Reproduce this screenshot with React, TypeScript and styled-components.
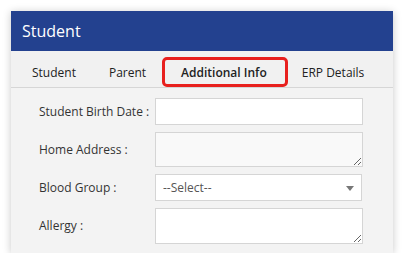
import React from "react";
import styled, { createGlobalStyle } from "styled-components";

const Global = createGlobalStyle`
  html, body { margin: 0; padding: 0; background: #ffffff; }
  body { font-family: "Open Sans", "Noto Sans", Arial, sans-serif; }
  * { box-sizing: border-box; }
`;

const Page = styled.div`
  padding: 11px 0 0 11px;
`;

const Card = styled.div`
  width: 382px;
  height: 242px;
  background: #f3f3f3;
  box-shadow: 0 1px 8px rgba(0, 0, 0, 0.22);
  display: flex;
  flex-direction: column;
`;

const Header = styled.div`
  height: 40px;
  background: #23418f;
  color: #ffffff;
  font-size: 16px;
  display: flex;
  align-items: center;
  padding-left: 11px;
`;

const TabBar = styled.div`
  height: 37px;
  display: flex;
  align-items: flex-end;
  padding: 0 0 0 4px;
  border-bottom: 1px solid #d6d6d6;
  background: #f1f1f1;
`;

const Tab = styled.div<{ $active?: boolean }>`
  height: 30px;
  display: flex;
  align-items: center;
  white-space: nowrap;
  padding: 1px ${(p) => (p.$active ? "18px" : "13px")} 0 ${(p) => (p.$active ? "16px" : "14px")};
  margin-right: ${(p) => (p.$active ? "-3px" : "0")};
  font-size: 12px;
  color: #222;
  font-weight: ${(p) => (p.$active ? 600 : 400)};
  border: 3px solid ${(p) => (p.$active ? "#e8201e" : "transparent")};
  border-radius: 5px;
`;

const Form = styled.div`
  padding: 10px 30px 0 28px;
  display: grid;
  grid-template-columns: 116px 208px;
  row-gap: 7px;
  align-items: center;
`;

const Label = styled.label`
  font-size: 12px;
  line-height: 16px;
  color: #333;
  white-space: nowrap;
`;

const Input = styled.input`
  height: 27px;
  width: 100%;
  border: 1px solid #d5d5d5;
  background: #ffffff;
  outline: none;
  margin: 0;
  display: block;
`;

const TextArea = styled.textarea<{ $grey?: boolean; $h: number }>`
  height: ${(p) => p.$h}px;
  width: 100%;
  border: 1px solid #d5d5d5;
  background: ${(p) => (p.$grey ? "#f9f9f9" : "#ffffff")};
  outline: none;
  margin: 0;
  display: block;
  resize: vertical;
`;

const SelectWrap = styled.div`
  position: relative;
  height: 27px;
  width: 207px;
`;

const Select = styled.select`
  appearance: none;
  -webkit-appearance: none;
  display: block;
  width: 100%;
  height: 100%;
  border: 1px solid #d5d5d5;
  background: #ffffff;
  font-family: "Open Sans", Arial, sans-serif;
  font-size: 12px;
  color: #555;
  padding: 0 0 0 7px;
  outline: none;
  margin: 0;
`;

const Arrow = styled.span`
  position: absolute;
  right: 8px;
  top: 12px;
  width: 0;
  height: 0;
  border-left: 4px solid transparent;
  border-right: 4px solid transparent;
  border-top: 5px solid #777;
  pointer-events: none;
`;

export default function App() {
  return (
    <Page>
      <Global />
      <Card>
        <Header>Student</Header>
        <TabBar>
          <Tab>Student</Tab>
          <Tab>Parent</Tab>
          <Tab $active>Additional Info</Tab>
          <Tab>ERP Details</Tab>
        </TabBar>
        <Form>
          <Label>Student Birth Date :</Label>
          <Input type="text" />
          <Label>Home Address :</Label>
          <TextArea $grey $h={35} />
          <Label>Blood Group :</Label>
          <SelectWrap>
            <Select defaultValue="">
              <option value="">--Select--</option>
            </Select>
            <Arrow />
          </SelectWrap>
          <Label>Allergy :</Label>
          <TextArea $h={36} />
        </Form>
      </Card>
    </Page>
  );
}
